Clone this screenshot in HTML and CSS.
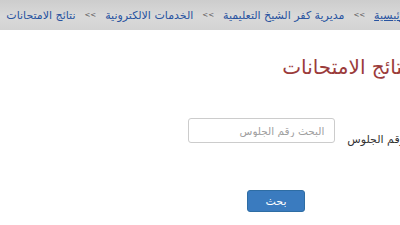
FILE: index.html
```html
<!DOCTYPE html>
<html lang="ar">
<head>
<meta charset="utf-8">
<link rel="stylesheet" href="styles.css">
</head>
<body>
<div class="page" dir="rtl">
  <nav class="crumbs">
    <a class="crumb home" href="#">الرئيسية</a>
    <span class="sep">&gt;&gt;</span>
    <a class="crumb" href="#">مديرية كفر الشيخ التعليمية</a>
    <span class="sep">&gt;&gt;</span>
    <a class="crumb" href="#">الخدمات الالكترونية</a>
    <span class="sep">&gt;&gt;</span>
    <a class="crumb" href="#">نتائج الامتحانات</a>
  </nav>
  <h1 class="title">نتائج الامتحانات</h1>
  <form class="form">
    <div class="row">
      <label class="label">رقم الجلوس</label>
      <input class="input" type="text" placeholder="البحث رقم الجلوس">
    </div>
    <div class="actions">
      <button class="btn" type="button">بحث</button>
    </div>
  </form>
</div>
</body>
</html>
```

FILE: styles.css
```css
html, body {
  margin: 0;
  padding: 0;
  overflow: hidden;
  background: #ffffff;
}
.page {
  width: 432px;
  direction: rtl;
  font-family: "DejaVu Sans", "Noto Sans", sans-serif;
}
.crumbs {
  height: 30px;
  display: flex;
  align-items: center;
  padding: 0 20px 0 0;
  background: linear-gradient(#cdcdcd, #d9d9d9 55%, #d3d3d3);
  font-size: 11px;
  white-space: nowrap;
}
.crumb {
  color: #2853a0;
  text-decoration: none;
}
.crumb.home {
  text-decoration: underline;
}
.sep {
  color: #555;
  font-size: 7px;
  margin: 0 9px;
}
.title {
  margin: 23px 24px 0 0;
  font-size: 20px;
  font-weight: normal;
  color: #9b3b3b;
  line-height: 28px;
}
.form {
  margin-top: 37px;
}
.row {
  display: flex;
  align-items: flex-start;
  gap: 12px;
  padding-right: 27px;
}
.label {
  font-size: 11px;
  line-height: 13px;
  color: #333;
  margin-top: 15px;
}
.input {
  width: 147px;
  height: 25px;
  box-sizing: border-box;
  border: 1px solid #ccc;
  border-radius: 3px;
  padding: 0 10px;
  font-family: inherit;
  font-size: 10.5px;
  direction: rtl;
}
.input::placeholder {
  color: #a0a0a0;
}
.actions {
  margin-top: 44px;
  padding-right: 127px;
  display: flex;
}
.btn {
  width: 58px;
  height: 22px;
  border: 1px solid #2e6da4;
  border-radius: 3px;
  background: #3a7bbf;
  color: #fff;
  font-family: inherit;
  font-size: 11px;
  padding: 0;
}
```
